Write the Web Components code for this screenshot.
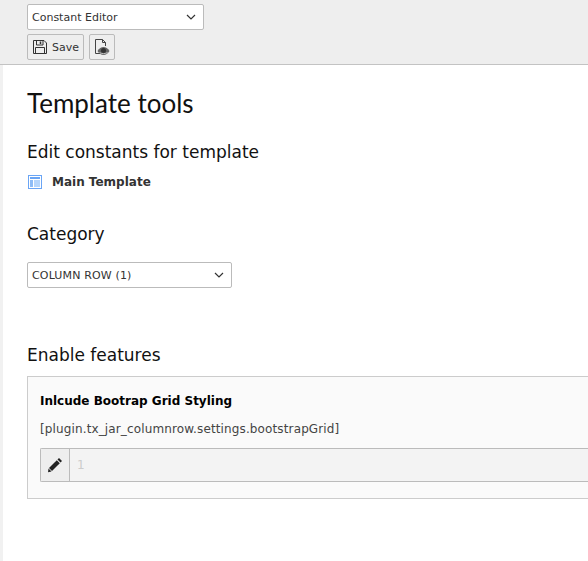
<!DOCTYPE html>
<html>
<head>
<meta charset="utf-8">
<title>Template tools</title>
<style>
  html, body { margin: 0; height: 100%; overflow: hidden; background: #fff; }
  body { font-family: "DejaVu Sans", Verdana, sans-serif; font-size: 11px; color: #333; }
</style>
</head>
<body>
<be-docheader></be-docheader>
<be-module>
  <h-title slot="title" level="1">Template tools</h-title>
  <h-title slot="sub" level="2">Edit constants for template</h-title>
  <be-record slot="record">Main Template</be-record>
  <h-title slot="category" level="3">Category</h-title>
  <be-select slot="select" width="205" spacing="0.15">COLUMN ROW (1)</be-select>
  <h-title slot="features" level="4">Enable features</h-title>
  <be-constant slot="panel" label="Inlcude Bootrap Grid Styling" path="[plugin.tx_jar_columnrow.settings.bootstrapGrid]" value="1"></be-constant>
</be-module>

<script>
class BeSelect extends HTMLElement {
  constructor() {
    super();
    this.root = this.attachShadow({ mode: 'open' });
  }
  connectedCallback() {
    const width = this.getAttribute('width') || 177;
    const spacing = this.getAttribute('spacing') || 0;
    this.root.innerHTML = `
      <style>
        :host { display: flex; align-items: center; box-sizing: border-box; width: ${width}px; height: 26px;
          background: #fff; border: 1px solid #bbb; border-radius: 2px; padding: 0 7px 0 4px; font-size: 11px; color: #333; }
        .text { flex: 1; white-space: nowrap; letter-spacing: ${spacing}px; }
        svg { width: 10px; height: 6px; display: block; }
      </style>
      <span class="text"><slot></slot></span>
      <svg viewBox="0 0 10 6"><path d="M1 1l4 4 4-4" fill="none" stroke="#333" stroke-width="1.2"/></svg>
    `;
  }
}
customElements.define('be-select', BeSelect);

class BeButton extends HTMLElement {
  constructor() {
    super();
    this.root = this.attachShadow({ mode: 'open' });
    this.root.innerHTML = `
      <style>
        :host { display: inline-flex; align-items: center; gap: 4px; box-sizing: border-box; height: 26px; padding: 0 4px;
          background: #eee; border: 1px solid #bbb; border-radius: 2px; font-size: 11px; color: #333; }
        ::slotted(svg) { display: block; }
      </style>
      <slot></slot>
    `;
  }
}
customElements.define('be-button', BeButton);

class BeDocheader extends HTMLElement {
  constructor() {
    super();
    this.root = this.attachShadow({ mode: 'open' });
    this.root.innerHTML = `
      <style>
        :host { display: flex; flex-direction: column; gap: 4px; box-sizing: border-box; height: 65px; padding: 4px 27px 0;
          background: #eee; border-bottom: 1px solid #c3c3c3; }
        .row { display: flex; gap: 5px; }
      </style>
      <be-select width="177">Constant Editor</be-select>
      <div class="row">
        <be-button>
          <svg width="16" height="16" viewBox="0 0 16 16" fill="none" stroke="#333" stroke-width="1">
            <path d="M1.500 1.500h10.500l2.500 2.500v10.500h-13z"/><path d="M4.500 1.500v4.500h6.500v-4.500"/><path d="M8.500 2.500v2.500" stroke-width="1.500"/><path d="M3.500 14.500v-6h9v6"/>
          </svg>
          Save
        </be-button>
        <be-button>
          <svg width="16" height="18" viewBox="0 0 16 18">
            <path d="M6 15.500H1.500v-14h7l3 3v3.500M8.500 1.500v3h3" fill="none" stroke="#444" stroke-width="1"/>
            <path d="M3.500 13c1.500-2.800 3.800-4 6-4s4.500 1.200 6 4c-1.500 2.800-3.800 4-6 4s-4.500-1.200-6-4z" fill="#666"/>
            <circle cx="9.500" cy="12.500" r="2.500" fill="#333"/>
            <path d="M5.500 14.500c2 1.500 6 1.500 8 0" fill="none" stroke="#bbb" stroke-width="1"/>
          </svg>
        </be-button>
      </div>
    `;
  }
}
customElements.define('be-docheader', BeDocheader);

class HTitle extends HTMLElement {
  constructor() {
    super();
    this.root = this.attachShadow({ mode: 'open' });
  }
  connectedCallback() {
    const big = this.getAttribute('level') === '1';
    this.root.innerHTML = `
      <style>
        :host { display: block; white-space: nowrap; color: #111;
          font-family: ${big ? 'Lato, "Noto Sans"' : '"DejaVu Sans", Verdana'}, sans-serif;
          font-size: ${big ? 26 : 17}px; line-height: ${big ? 36 : 22}px; }
      </style>
      <slot></slot>
    `;
  }
}
customElements.define('h-title', HTitle);

class BeRecord extends HTMLElement {
  constructor() {
    super();
    this.root = this.attachShadow({ mode: 'open' });
    this.root.innerHTML = `
      <style>
        :host { display: flex; align-items: center; gap: 10px; height: 16px; font-size: 12px; font-weight: bold; color: #333; }
        svg { display: block; margin-left: 1px; }
      </style>
      <svg width="14" height="14" viewBox="0 0 14 14">
        <rect x="0.500" y="0.500" width="13" height="13" fill="#fff" stroke="#6aa5f5"/>
        <rect x="2" y="2" width="10" height="2" fill="#6aa5f5"/>
        <rect x="2" y="5" width="3" height="7" fill="#8dbcf7"/>
        <rect x="6" y="5" width="6" height="7" fill="#b5d5fb"/>
      </svg>
      <span><slot></slot></span>
    `;
  }
}
customElements.define('be-record', BeRecord);

class BeConstant extends HTMLElement {
  constructor() {
    super();
    this.root = this.attachShadow({ mode: 'open' });
  }
  connectedCallback() {
    this.root.innerHTML = `
      <style>
        :host { display: block; box-sizing: border-box; height: 123px; margin-right: -40px; padding: 16px 12px 0;
          background: #fafafa; border: 1px solid #ccc; border-right: 0; }
        .label { font-size: 12px; font-weight: bold; color: #000; line-height: 16px; }
        .path { font-size: 12px; color: #444; line-height: 16px; margin-top: 12px; letter-spacing: 0.13px; }
        .group { display: flex; height: 32px; margin-top: 11px; border: 1px solid #bbb; border-right: 0; border-radius: 2px 0 0 2px; }
        .edit { display: flex; align-items: center; justify-content: center; width: 28px; background: #eee; border-right: 1px solid #bbb; }
        .value { flex: 1; display: flex; align-items: center; padding-left: 7px; background: #f3f3f3; color: #ccc; font-size: 12px; }
      </style>
      <div class="label">${this.getAttribute('label')}</div>
      <div class="path">${this.getAttribute('path')}</div>
      <div class="group">
        <div class="edit">
          <svg width="16" height="16" viewBox="0 0 16 16" fill="#222">
            <path d="M12 1l3 3-1.500 1.500-3-3z"/><path d="M9.800 3.200l3 3-7.800 7.800-3-3z"/><path d="M1.500 11.500l3 3-3.500 .8z"/>
          </svg>
        </div>
        <div class="value">${this.getAttribute('value')}</div>
      </div>
    `;
  }
}
customElements.define('be-constant', BeConstant);

class BeModule extends HTMLElement {
  constructor() {
    super();
    this.root = this.attachShadow({ mode: 'open' });
    this.root.innerHTML = `
      <style>
        :host { display: block; box-sizing: border-box; height: 496px; overflow: hidden; background: #fff;
          border-left: 3px solid #f1f1f1; padding: 20px 24px 0; }
        .sub { margin-top: 20px; }
        .record { margin-top: 11px; }
        .category { margin-top: 33px; }
        .select { margin-top: 17px; }
        .features { margin-top: 56px; }
        .panel { margin-top: 10px; }
      </style>
      <slot name="title"></slot>
      <div class="sub"><slot name="sub"></slot></div>
      <div class="record"><slot name="record"></slot></div>
      <div class="category"><slot name="category"></slot></div>
      <div class="select"><slot name="select"></slot></div>
      <div class="features"><slot name="features"></slot></div>
      <div class="panel"><slot name="panel"></slot></div>
    `;
  }
}
customElements.define('be-module', BeModule);
</script>
</body>
</html>
